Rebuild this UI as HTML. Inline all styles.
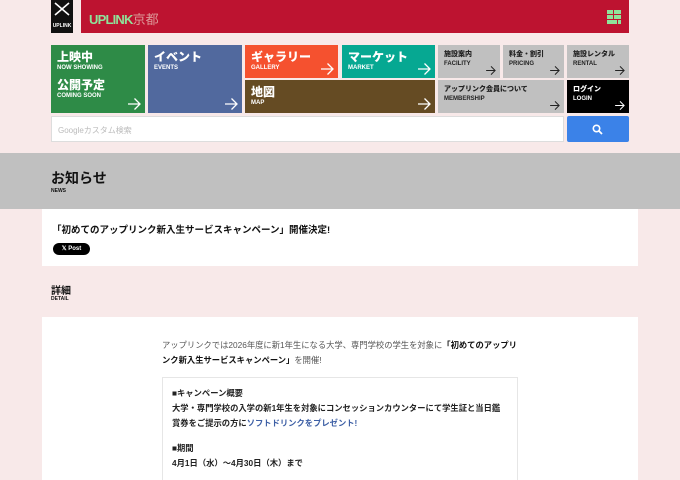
<!DOCTYPE html>
<html><head><meta charset="utf-8"><style>
*{margin:0;padding:0;box-sizing:border-box}
html,body{width:680px;height:480px;overflow:hidden}
body{background:#f8e9e9;font-family:"Liberation Sans","Noto Sans CJK JP",sans-serif;position:relative}
.a{position:absolute}
.t{position:absolute;color:#fff;padding:5px 6px;font-weight:bold}
.t b{display:block;font-size:12px;line-height:14px}
.t i{display:block;font-style:normal;font-size:6px;line-height:9px}
.ar{position:absolute;right:4px;bottom:3px;width:13px;height:12px}
.g{background:#c0c0c0;color:#222}
.g b{font-size:7px;line-height:10px}
.g .ar{width:10px;height:9px}
</style></head><body>
<div class="a" style="left:51px;top:0;width:22px;height:33px;background:#111;color:#fff;text-align:center">
<svg class="a" style="left:3px;top:2px" width="16" height="14"><path d="M1 1L15 13M15 1L1 13" stroke="#fff" stroke-width="1.6"/></svg><div class="a" style="left:0;width:22px;top:23px;font-size:5px;font-weight:bold">UPLINK</div></div>
<div class="a" style="left:81px;top:0;width:548px;height:33px;background:#bd1330">
<span class="a" style="left:8px;top:9px;color:#8fe39a;font-weight:bold;font-size:13px;letter-spacing:-0.8px">UPLINK<span style="font-weight:normal;color:#d99;letter-spacing:0">京都</span></span>
<svg class="a" style="right:8px;top:10px" width="14" height="14"><rect x="0" y="0" width="6" height="4" fill="#8fe39a"/><rect x="7" y="0" width="7" height="4" fill="#8fe39a"/><rect x="0" y="5" width="6" height="4" fill="#8fe39a"/><rect x="7" y="5" width="7" height="4" fill="#8fe39a"/><rect x="0" y="10" width="10" height="4" fill="#8fe39a"/><rect x="11" y="10" width="3" height="4" fill="#8fe39a"/></svg></div>
<svg width="0" height="0" style="position:absolute"><defs><symbol id="ar" viewBox="0 0 13 12"><path d="M0 6H12M6.5 0.5L12 6L6.5 11.5" stroke="currentColor" stroke-width="1.3" fill="none"/></symbol></defs></svg>
<div class="t" style="left:51px;top:45px;width:94px;height:68px;background:#2e8b47"><b>上映中</b><i>NOW SHOWING</i><b style="margin-top:5px">公開予定</b><i>COMING SOON</i><svg class="ar"><use href="#ar"/></svg></div>
<div class="t" style="left:148px;top:45px;width:94px;height:68px;background:#51699e"><b>イベント</b><i>EVENTS</i><svg class="ar"><use href="#ar"/></svg></div>
<div class="t" style="left:245px;top:45px;width:93px;height:33px;background:#f5512f"><b>ギャラリー</b><i>GALLERY</i><svg class="ar"><use href="#ar"/></svg></div>
<div class="t" style="left:342px;top:45px;width:93px;height:33px;background:#06a892"><b>マーケット</b><i>MARKET</i><svg class="ar"><use href="#ar"/></svg></div>
<div class="t" style="left:245px;top:80px;width:190px;height:33px;background:#654b23"><b>地図</b><i>MAP</i><svg class="ar"><use href="#ar"/></svg></div>
<div class="t g" style="left:438px;top:45px;width:62px;height:33px"><b>施設案内</b><i>FACILITY</i><svg class="ar"><use href="#ar"/></svg></div>
<div class="t g" style="left:503px;top:45px;width:61px;height:33px"><b>料金・割引</b><i>PRICING</i><svg class="ar"><use href="#ar"/></svg></div>
<div class="t g" style="left:567px;top:45px;width:62px;height:33px"><b>施設レンタル</b><i>RENTAL</i><svg class="ar"><use href="#ar"/></svg></div>
<div class="t g" style="left:438px;top:80px;width:126px;height:33px"><b>アップリンク会員について</b><i>MEMBERSHIP</i><svg class="ar"><use href="#ar"/></svg></div>
<div class="t g" style="left:567px;top:80px;width:62px;height:33px;background:#000;color:#fff"><b>ログイン</b><i>LOGIN</i><svg class="ar"><use href="#ar"/></svg></div>
<div class="a" style="left:51px;top:116px;width:513px;height:26px;background:#fff;border:1px solid #ddd;font-size:8px;color:#bbb;padding:8px 6px">Googleカスタム検索</div>
<div class="a" style="left:567px;top:116px;width:62px;height:26px;background:#3b82e8;border-radius:2px"><svg class="a" style="left:25px;top:8px" width="11" height="11"><circle cx="4.5" cy="4.5" r="3.2" stroke="#fff" stroke-width="1.6" fill="none"/><line x1="7" y1="7" x2="10" y2="10" stroke="#fff" stroke-width="1.8"/></svg></div>
<div class="a" style="left:0;top:153px;width:680px;height:56px;background:#c0c0c0">
<div class="a" style="left:51px;top:15px;font-size:14px;font-weight:bold;color:#111">お知らせ</div>
<div class="a" style="left:51px;top:35px;font-size:5px;font-weight:bold;color:#111">NEWS</div></div>
<div class="a" style="left:42px;top:209px;width:596px;height:57px;background:#fff">
<div class="a" style="left:10px;top:13px;font-size:9.5px;font-weight:bold;color:#111">「初めてのアップリンク新入生サービスキャンペーン」開催決定!</div>
<div class="a" style="left:11px;top:34px;width:37px;height:12px;background:#000;border-radius:6px;color:#fff;font-size:6px;font-weight:bold;text-align:center;line-height:12px">𝕏 Post</div></div>
<div class="a" style="left:51px;top:282px;font-size:10px;font-weight:bold;color:#111">詳細</div>
<div class="a" style="left:51px;top:296px;font-size:5px;font-weight:bold;color:#111">DETAIL</div>
<div class="a" style="left:42px;top:317px;width:596px;height:170px;background:#fff">
<div class="a" style="left:120px;top:21px;width:360px;font-size:8.3px;line-height:15px;color:#555">アップリンクでは2026年度に新1年生になる大学、専門学校の学生を対象に<b style="color:#111">「初めてのアップリンク新入生サービスキャンペーン」</b>を開催!</div>
<div class="a" style="left:120px;top:60px;width:356px;height:120px;border:1px solid #e6e6e6;padding:8px 9px;font-size:8.3px;line-height:15px;font-weight:bold;color:#222">■キャンペーン概要<br>大学・専門学校の入学の新1年生を対象にコンセッションカウンターにて学生証と当日鑑賞券をご提示の方に<span style="color:#3d5fa5">ソフトドリンクをプレゼント!</span><div style="height:10px"></div>■期間<br>4月1日（水）～4月30日（木）まで</div></div>
</body></html>
